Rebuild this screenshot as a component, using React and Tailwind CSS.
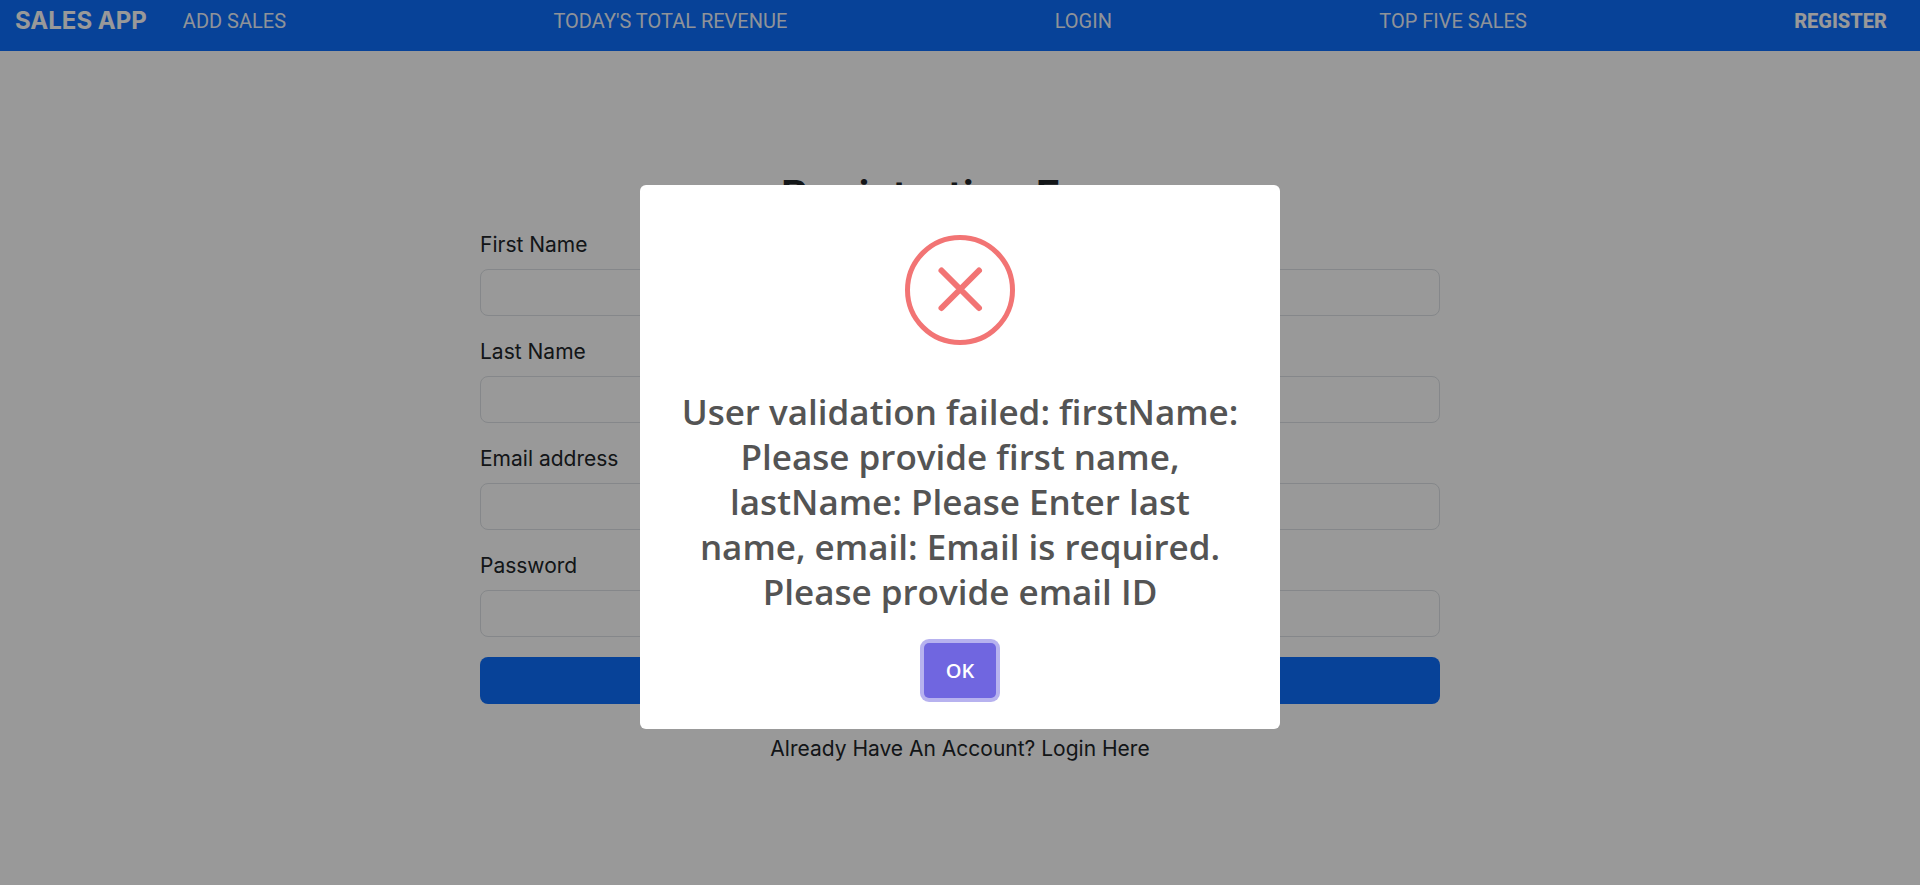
const NAV_LINKS = [
  { label: "ADD SALES" },
  { label: "TODAY'S TOTAL REVENUE" },
  { label: "LOGIN" },
  { label: "TOP FIVE SALES" },
  { label: "REGISTER", active: true },
];

const FIELDS = [
  { id: "firstName", label: "First Name", type: "text" },
  { id: "lastName", label: "Last Name", type: "text" },
  { id: "email", label: "Email address", type: "email" },
  { id: "password", label: "Password", type: "password" },
];

function NavBar() {
  return (
    <nav className="flex items-center gap-9 bg-[#0d6efd] pt-[6px] pr-[33px] pb-[15px] pl-[15px] text-xl leading-[30px] text-white">
      <a href="#home" className="shrink-0 text-2xl leading-[30px] font-bold">
        SALES APP
      </a>
      <ul className="flex grow justify-between font-['Roboto',sans-serif]">
        {NAV_LINKS.map((link) => (
          <li key={link.label}>
            <a href="#" className={link.active ? "font-extrabold" : "text-white/95"}>
              {link.label}
            </a>
          </li>
        ))}
      </ul>
    </nav>
  );
}

function RegistrationForm() {
  return (
    <main className="mx-auto w-1/2 pt-[120px]">
      <h2 className="mb-[10px] text-center text-[42px] leading-[50px] font-semibold">
        Registration Form
      </h2>
      <form className="-mt-[2px] flex flex-col gap-5">
        {FIELDS.map((field) => (
          <div key={field.id} className="flex flex-col gap-[9px]">
            <label htmlFor={field.id} className="leading-[31px]">
              {field.label}
            </label>
            <input
              id={field.id}
              type={field.type}
              className="h-[47px] w-full rounded-lg border border-[#dee2e6] bg-white px-4"
            />
          </div>
        ))}
        <button
          type="submit"
          aria-label="Register"
          className="h-[47px] w-full rounded-lg bg-[#0d6efd]"
        />
      </form>
      <p className="mt-[29px] text-center leading-[31px]">
        <a href="#login">Already Have An Account? Login Here</a>
      </p>
    </main>
  );
}

function ErrorDialog() {
  return (
    <div className="fixed inset-0 flex items-start justify-center overflow-auto bg-black/40 pt-[185px]">
      <div
        role="alertdialog"
        aria-modal="true"
        aria-labelledby="dialog-title"
        className="flex w-[640px] max-w-full flex-col items-center rounded-md bg-white px-10 pt-[50px] pb-[31px] font-['Open_Sans','Noto_Sans',sans-serif]"
      >
        <svg width="110" height="110" viewBox="0 0 110 110" fill="none" stroke="#f27474" aria-hidden="true">
          <circle cx="55" cy="55" r="52.5" strokeWidth="5" />
          <path d="M36.5 35.5 74 73M74 35.5 36.5 73" strokeWidth="6" strokeLinecap="round" />
        </svg>
        <h2
          id="dialog-title"
          className="mt-11 text-center text-[35px] leading-[45px] font-semibold text-[#545454]"
        >
          User validation failed: firstName: Please provide first name, lastName: Please Enter last
          name, email: Email is required. Please provide email ID
        </h2>
        <button
          type="button"
          className="mt-[29px] h-[55px] w-[72px] rounded-[5px] bg-[#7066e0] text-xl font-semibold text-white ring-4 ring-[#7066e0]/50"
        >
          OK
        </button>
      </div>
    </div>
  );
}

export default function App() {
  return (
    <div className="min-h-screen bg-white font-['Inter',sans-serif] text-[21px] text-[#212529]">
      <NavBar />
      <RegistrationForm />
      <ErrorDialog />
    </div>
  );
}
